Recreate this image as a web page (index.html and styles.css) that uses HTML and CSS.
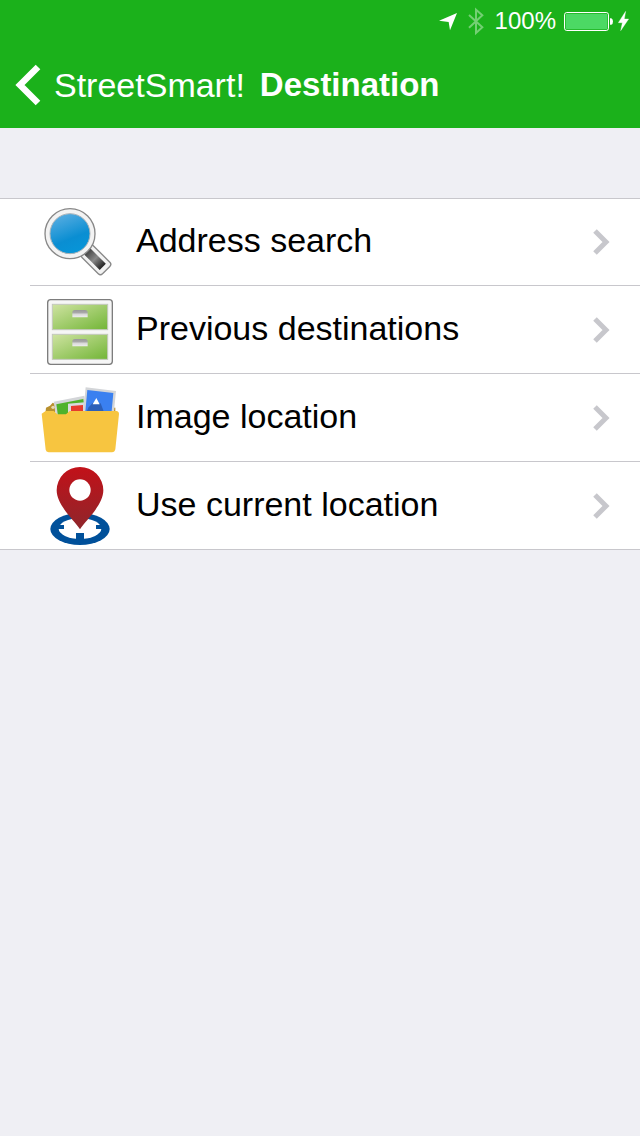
FILE: index.html
```html
<!DOCTYPE html>
<html lang="en">
<head>
  <meta charset="UTF-8">
  <meta name="viewport" content="width=device-width, initial-scale=1.0">
  <title>Destination</title>
  <link rel="stylesheet" href="styles.css">
</head>
<body>
  <header class="header">
    <div class="status-bar">
      <svg class="status-location" width="18" height="20" viewBox="0 0 54 60" aria-hidden="true">
        <path d="M54 6 L33 58 L29 33 L0 29 Z" fill="#fff"/>
      </svg>
      <svg class="status-bluetooth" width="16" height="28" viewBox="0 0 48 84" aria-hidden="true">
        <path d="M3 24 L43 61 L24 78 V8 L43 25 L3 62" fill="none" stroke="#73d073" stroke-width="6"/>
      </svg>
      <span class="status-percent">100%</span>
      <svg class="status-battery" width="50" height="20" viewBox="0 0 150 60" aria-hidden="true">
        <rect x="1.5" y="4.5" width="132" height="54" rx="7" fill="none" stroke="#fff" stroke-width="3"/>
        <rect x="5" y="8" width="125" height="47" rx="3" fill="#4cd964"/>
        <path d="M138 22 H142 Q147 24 147 31.500 T142 41 H138 Z" fill="#fff"/>
      </svg>
      <svg class="status-bolt" width="11" height="20" viewBox="0 0 33 60" aria-hidden="true">
        <path d="M23 1 L1 35 H13 L8 59 L32 24 H19 Z" fill="#fff" stroke="#fff" stroke-width="1"/>
      </svg>
    </div>
    <nav class="nav-bar">
      <a class="back" href="#">
        <svg width="26" height="42" viewBox="0 0 26 42" aria-hidden="true">
          <path d="M23 3 L5 21 L23 39" fill="none" stroke="#fff" stroke-width="6.500"/>
        </svg>
        <span>StreetSmart!</span>
      </a>
      <h1 class="title">Destination</h1>
    </nav>
  </header>

  <main>
    <ul class="menu">
      <li class="menu-item">
        <a class="menu-link" href="#">
          <svg class="menu-icon" viewBox="54 33 252 252" aria-hidden="true">
            <defs>
              <linearGradient id="lens" x1="0.2" y1="0" x2="0.6" y2="1">
                <stop offset="0" stop-color="#5aaee2"/>
                <stop offset="0.65" stop-color="#0a8ed2"/>
                <stop offset="1" stop-color="#0795d8"/>
              </linearGradient>
              <linearGradient id="grip" x1="0" y1="0" x2="1" y2="0">
                <stop offset="0" stop-color="#444"/>
                <stop offset="0.5" stop-color="#888"/>
                <stop offset="1" stop-color="#222"/>
              </linearGradient>
            </defs>
            <g transform="rotate(45 150 131)">
              <rect x="217" y="107" width="87" height="49" rx="9" fill="#f2f2f2" stroke="#888" stroke-width="4"/>
              <rect x="224" y="119" width="66" height="26" fill="url(#grip)"/>
            </g>
            <circle cx="150" cy="131" r="75" fill="#f3f3f3" stroke="#888" stroke-width="4"/>
            <circle cx="150" cy="131" r="60" fill="url(#lens)" stroke="#aab4ba" stroke-width="3"/>
          </svg>
          <span class="menu-label">Address search</span>
          <svg class="chevron" viewBox="0 0 18 26" aria-hidden="true"><path d="M3 2 L14 13 L3 24"/></svg>
        </a>
      </li>
      <li class="menu-item">
        <a class="menu-link" href="#">
          <svg class="menu-icon" viewBox="54 12 252 252" aria-hidden="true">
            <defs>
              <linearGradient id="drawer" x1="0" y1="0" x2="1" y2="1">
                <stop offset="0" stop-color="#cfe3a2"/>
                <stop offset="1" stop-color="#72b536"/>
              </linearGradient>
              <linearGradient id="handle" x1="0" y1="0" x2="0" y2="1">
                <stop offset="0" stop-color="#999"/>
                <stop offset="0.4" stop-color="#aaa"/>
                <stop offset="0.55" stop-color="#d8d8d8"/>
                <stop offset="1" stop-color="#eee"/>
              </linearGradient>
            </defs>
            <rect x="83" y="44" width="194" height="194" rx="9" fill="#f6f6f6" stroke="#7d7d7d" stroke-width="4"/>
            <rect x="97" y="58" width="166" height="76" fill="url(#drawer)" stroke="#c3c8bd" stroke-width="3"/>
            <rect x="97" y="148" width="166" height="75" fill="url(#drawer)" stroke="#c3c8bd" stroke-width="3"/>
            <path d="M157 97 V83 Q157 75 165 75 H195 Q203 75 203 83 V97 Z" fill="url(#handle)"/>
            <path d="M157 184 V170 Q157 162 165 162 H195 Q203 162 203 170 V184 Z" fill="url(#handle)"/>
          </svg>
          <span class="menu-label">Previous destinations</span>
          <svg class="chevron" viewBox="0 0 18 26" aria-hidden="true"><path d="M3 2 L14 13 L3 24"/></svg>
        </a>
      </li>
      <li class="menu-item">
        <a class="menu-link" href="#">
          <svg class="menu-icon" viewBox="54 12 252 252" aria-hidden="true">
            <path d="M77 114 L78 104 L90 98 L98 89 L106 93 V118 H77 Z" fill="#b8902e"/>
            <circle cx="99" cy="103" r="5" fill="#e8d9b0"/>
            <path d="M270 104 H286 V120 H270 Z" fill="#b8902e"/>
            <path d="M101 86 L193 68 L200 120 L108 130 Z" fill="#d3d5d8"/>
            <path d="M109 94 L190 78 L194 120 L114 128 Z" fill="#4fb22b"/>
            <path d="M144 92 L194 88 L198 125 L144 125 Z" fill="#d9dbde"/>
            <path d="M153 99 L189 96 V125 L153 120 Z" fill="#e63b2e"/>
            <path d="M197 43 L288 54 L281 125 L189 125 Z" fill="#d3d5d8"/>
            <path d="M202 51 L280 60 L274 125 L195 125 Z" fill="#3a80f0"/>
            <path d="M206 103 L217 91 H242 L252 118 H199 Z" fill="#2c5fb8"/>
            <path d="M229 75 L239 94 H218 Z" fill="#fff"/>
            <path d="M65 122 L77 114 H101 L112 124 H138 L149 114 H289 Q297 115 297 123 L286 229 Q284 238 276 238 H86 Q78 237 77 230 Z" fill="#f7c540"/>
          </svg>
          <span class="menu-label">Image location</span>
          <svg class="chevron" viewBox="0 0 18 26" aria-hidden="true"><path d="M3 2 L14 13 L3 24"/></svg>
        </a>
      </li>
      <li class="menu-item">
        <a class="menu-link" href="#">
          <svg class="menu-icon" viewBox="54 15 252 252" aria-hidden="true">
            <defs>
              <linearGradient id="pin" x1="0" y1="0" x2="0" y2="1">
                <stop offset="0" stop-color="#c21119"/>
                <stop offset="1" stop-color="#8f262b"/>
              </linearGradient>
            </defs>
            <ellipse cx="180" cy="207" rx="89" ry="48" fill="#00509a"/>
            <ellipse cx="180" cy="206" rx="64" ry="31" fill="#fff"/>
            <path d="M110 195 H132 V207 H110 Z M228 195 H250 V207 H228 Z M168 219 H192 V242 H168 Z" fill="#00509a"/>
            <path d="M180 208 C164 182 110 136 110 91 A70 70 0 0 1 250 91 C250 136 196 182 180 208 Z" fill="url(#pin)"/>
            <circle cx="180" cy="90" r="32" fill="#fff"/>
          </svg>
          <span class="menu-label">Use current location</span>
          <svg class="chevron" viewBox="0 0 18 26" aria-hidden="true"><path d="M3 2 L14 13 L3 24"/></svg>
        </a>
      </li>
    </ul>
  </main>
</body>
</html>
```

FILE: styles.css
```css
* {
  box-sizing: border-box;
}
body {
  margin: 0;
  min-height: 100vh;
  background-color: #efeff4;
  color: #000;
  font-family: "Liberation Sans", Arial, sans-serif;
}
a {
  color: inherit;
  text-decoration: none;
}
svg {
  display: block;
  flex-shrink: 0;
}
.header {
  background-color: #1bb11b;
  color: #fff;
}
.status-bar {
  display: flex;
  justify-content: flex-end;
  align-items: center;
  height: 41px;
  padding-right: 11px;
}
.status-bluetooth {
  margin-left: 11px;
}
.status-percent {
  margin-left: 11px;
  font-size: 24px;
  line-height: 40px;
}
.status-battery {
  margin-left: 8px;
}
.status-bolt {
  margin-left: 4px;
}
.nav-bar {
  display: flex;
  align-items: center;
  height: 87px;
  padding: 0 15px;
}
.back {
  display: flex;
  align-items: center;
  gap: 13px;
  font-size: 34px;
  line-height: 40px;
}
.title {
  margin: 0 0 0 15px;
  font-size: 33px;
  line-height: 40px;
}
.menu {
  margin: 70px 0 0;
  padding: 0;
  list-style: none;
  background-color: #fff;
  border-top: 1px solid #c8c7cc;
  border-bottom: 1px solid #c8c7cc;
}
.menu-item {
  padding-left: 30px;
}
.menu-link {
  display: flex;
  align-items: center;
  height: 88px;
  padding: 0 30px 0 8px;
  border-bottom: 1px solid #c8c7cc;
}
.menu-item:first-child .menu-link {
  height: 87px;
}
.menu-item:last-child .menu-link {
  height: 87px;
  border-bottom: none;
}
.menu-icon {
  width: 84px;
  height: 84px;
  align-self: flex-end;
}
.menu-label {
  flex: 1;
  margin-left: 14px;
  padding-bottom: 4px;
  font-size: 34px;
  line-height: 40px;
}
.chevron {
  width: 18px;
  height: 26px;
  fill: none;
  stroke: #c7c7cc;
  stroke-width: 5;
}
```
